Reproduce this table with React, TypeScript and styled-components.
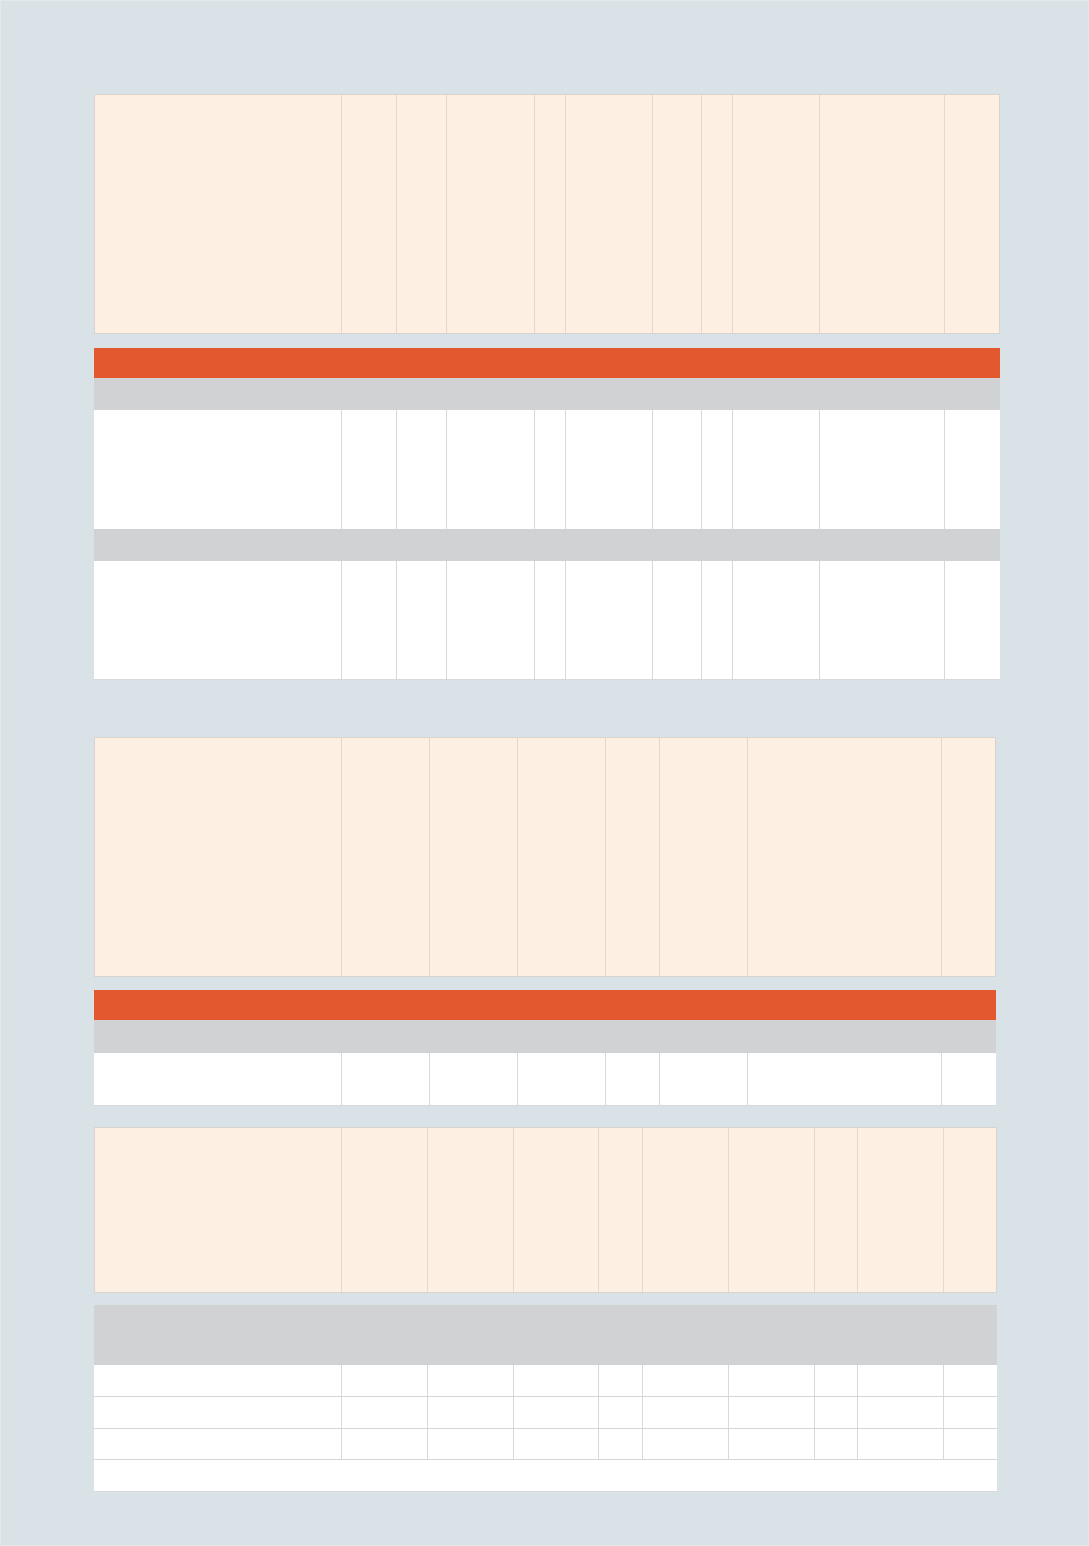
import React from 'react';
import styled, { createGlobalStyle } from 'styled-components';

// Three empty report tables on a blue-grey page.
const GlobalStyle = createGlobalStyle`
  html, body {
    margin: 0;
    padding: 0;
    background: #d8e2e7;
    font-family: 'Liberation Sans', Arial, sans-serif;
  }
`;

type Tone = 'head' | 'band' | 'sub' | 'body';

const TONES: Record<Tone, string> = {
  head: '#fdefe2',
  band: '#e45830',
  sub: '#d0d2d4',
  body: '#ffffff',
};

const LINES: Record<Tone, string> = {
  head: '#e3d9cf',
  band: '#e45830',
  sub: '#d0d2d4',
  body: '#d8d8d8',
};

type TableSpec = {
  cols: number[];
  headHeight: number;
  rows: { tone: Tone; height: number; split?: boolean }[];
  gapAfterHead: number;
  marginTop: number;
};

const TABLES: TableSpec[] = [
  {
    cols: [247, 55, 50, 88, 31, 87, 49, 31, 87, 125, 56],
    headHeight: 240,
    gapAfterHead: 14,
    marginTop: 0,
    rows: [
      { tone: 'band', height: 30 },
      { tone: 'sub', height: 32 },
      { tone: 'body', height: 119, split: true },
      { tone: 'sub', height: 32 },
      { tone: 'body', height: 118, split: true },
    ],
  },
  {
    cols: [247, 88, 88, 88, 54, 88, 194, 55],
    headHeight: 240,
    gapAfterHead: 13,
    marginTop: 57,
    rows: [
      { tone: 'band', height: 30 },
      { tone: 'sub', height: 33 },
      { tone: 'body', height: 52, split: true },
    ],
  },
  {
    cols: [247, 86, 86, 85, 44, 86, 86, 43, 86, 54],
    headHeight: 166,
    gapAfterHead: 12,
    marginTop: 21,
    rows: [
      { tone: 'sub', height: 60 },
      { tone: 'body', height: 32, split: true },
      { tone: 'body', height: 32, split: true },
      { tone: 'body', height: 31, split: true },
      { tone: 'body', height: 31 },
    ],
  },
];

// head rows sit inside a 1px frame, so the outer columns lose a pixel
const headTemplate = (cols: number[]) =>
  cols.map((w, i) => `${i === 0 || i === cols.length - 1 ? w - 1 : w}px`).join(' ');

const bodyTemplate = (cols: number[]) => cols.map((w) => `${w}px`).join(' ');

const App: React.FC = () => {
  return (
    <Page>
      <GlobalStyle />
      {TABLES.map((table, t) => {
        const width = table.cols.reduce((a, b) => a + b, 0);
        return (
          <Table key={t} width={width} marginTop={table.marginTop}>
            <HeadBlock height={table.headHeight} cols={headTemplate(table.cols)}>
              {table.cols.map((_, i) => (
                <Cell key={i} tone="head" first={i === 0} />
              ))}
            </HeadBlock>
            <BodyBlock marginTop={table.gapAfterHead}>
              {table.rows.map((row, r) =>
                row.split ? (
                  <Row
                    key={r}
                    cols={bodyTemplate(table.cols)}
                    height={row.height}
                    tone={row.tone}
                    ruled={r < table.rows.length - 1 && table.rows[r + 1].tone === 'body'}
                  >
                    {table.cols.map((_, i) => (
                      <Cell key={i} tone={row.tone} first={i === 0} />
                    ))}
                  </Row>
                ) : (
                  <Band key={r} height={row.height} tone={row.tone} />
                ),
              )}
            </BodyBlock>
          </Table>
        );
      })}
    </Page>
  );
};

export default App;

const Page = styled.main`
  box-sizing: border-box;
  width: 1089px;
  min-height: 1546px;
  padding: 93px 0 0 93px;
  border: 1px solid #e2e8eb;
  background: #d8e2e7;
`;

const Table = styled.section<{ width: number; marginTop: number }>`
  width: ${(props) => props.width}px;
  margin-top: ${(props) => props.marginTop}px;
`;

const HeadBlock = styled.div<{ height: number; cols: string }>`
  box-sizing: border-box;
  display: grid;
  grid-template-columns: ${(props) => props.cols};
  height: ${(props) => props.height}px;
  border: 1px solid #d9d3cd;
  background: ${TONES.head};
`;

const BodyBlock = styled.div<{ marginTop: number }>`
  box-sizing: border-box;
  display: flex;
  flex-direction: column;
  margin-top: ${(props) => props.marginTop}px;
  border: 1px solid #d6d8da;
  border-top: none;
  background: #ffffff;
`;

const Row = styled.div<{ cols: string; height: number; tone: Tone; ruled: boolean }>`
  box-sizing: border-box;
  display: grid;
  grid-template-columns: ${(props) => props.cols};
  margin: 0 -1px;
  height: ${(props) => props.height}px;
  background: ${(props) => TONES[props.tone]};
  border-bottom: ${(props) => (props.ruled ? '1px solid #d6d6d6' : 'none')};
`;

const Band = styled.div<{ height: number; tone: Tone }>`
  height: ${(props) => props.height}px;
  margin: 0 -1px;
  background: ${(props) => TONES[props.tone]};
`;

const Cell = styled.div<{ tone: Tone; first: boolean }>`
  box-sizing: border-box;
  height: 100%;
  border-left: ${(props) => (props.first ? 'none' : `1px solid ${LINES[props.tone]}`)};
`;
